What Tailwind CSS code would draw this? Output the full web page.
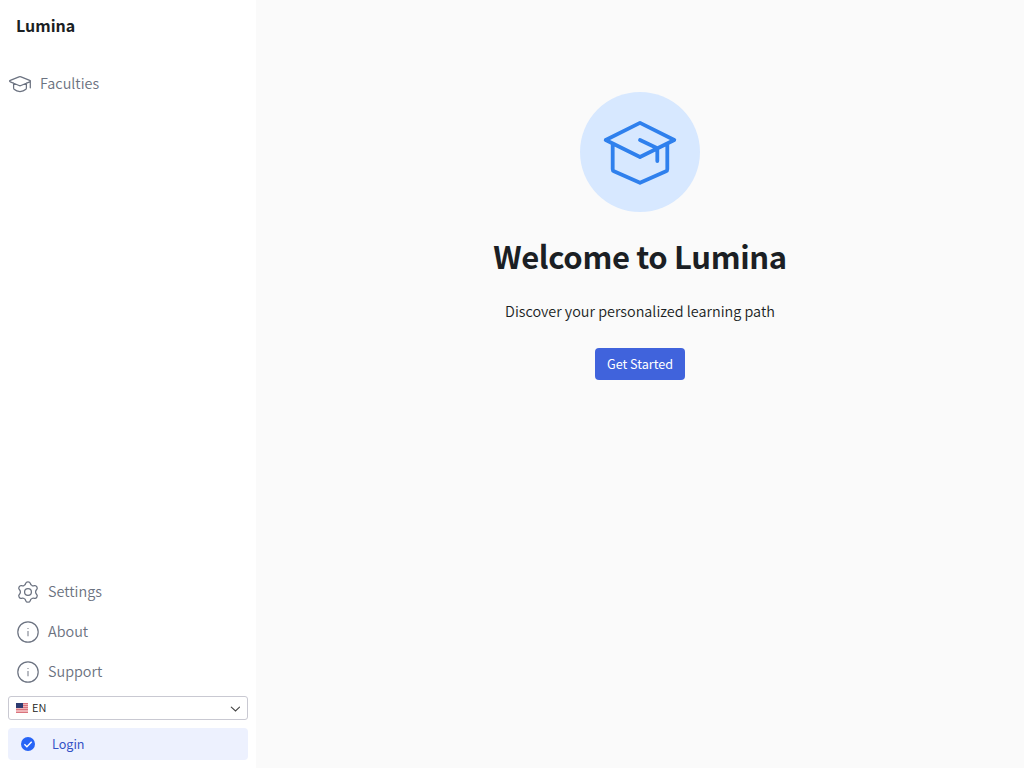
<!DOCTYPE html>
<html lang="en">
<head>
<meta charset="utf-8">
<title>Lumina</title>
<script src="https://cdn.jsdelivr.net/npm/@tailwindcss/browser@4"></script>
</head>
<body class="flex h-screen overflow-hidden bg-[#fafafa] font-['Noto_Sans_CJK_SC',sans-serif] text-[#1b1f24]">
<aside class="flex w-64 flex-col bg-white">
  <h1 class="px-4 pt-3 text-[16px] leading-[26px] font-bold">Lumina</h1>
  <nav class="mt-[34px] flex h-6 items-center gap-2 px-2 text-[14.4px] leading-6 font-[350] text-[#6b7280]">
    <svg class="size-6" viewBox="0 0 24 24" fill="none" stroke="currentColor" stroke-width="1.25" stroke-linecap="round" stroke-linejoin="round"><path d="M13 4.900l8.700 3.400c1 .4 1 1.100 0 1.500L13 13.500c-.6.3-1.400.3-2 0L2.300 9.800c-1-.4-1-1.100 0-1.500L11 4.900c.6-.2 1.400-.2 2 0zM22.300 9.300v6.500M5.600 11.200v4.900c0 .4.200.8.500 1.100 3.300 3.100 8.500 3.100 11.800 0 .3-.3.500-.7.500-1.100v-4.900"/></svg>
    <span class="mt-[-2px]">Faculties</span>
  </nav>
  <div class="mt-auto flex flex-col gap-4 px-4 pb-3 text-[14.4px] leading-6 font-[350] text-[#6b7280]">
    <div class="flex h-6 items-center gap-2">
      <svg class="size-6" viewBox="0 0 24 24" fill="none" stroke="currentColor" stroke-width="1.25" stroke-linejoin="round"><circle cx="12" cy="12" r="3.400"/><defs><path id="tooth" d="M8.200 5.420C9.400 4.730 9.600 3.900 9.800 3.200C10.300 1.300 13.700 1.300 14.200 3.200C14.400 3.900 14.600 4.730 15.800 5.420"/></defs><use href="#tooth"/><use href="#tooth" transform="rotate(60 12 12)"/><use href="#tooth" transform="rotate(120 12 12)"/><use href="#tooth" transform="rotate(180 12 12)"/><use href="#tooth" transform="rotate(240 12 12)"/><use href="#tooth" transform="rotate(300 12 12)"/></svg>
      <span class="mt-[-2px]">Settings</span>
    </div>
    <div class="flex h-6 items-center gap-2">
      <svg class="size-6" viewBox="0 0 24 24" fill="none" stroke="currentColor" stroke-width="1.2"><circle cx="12" cy="12" r="10.200"/><path d="M12 11v5.200M12 8v1.100" stroke-opacity=".8"/></svg>
      <span class="mt-[-2px]">About</span>
    </div>
    <div class="flex h-6 items-center gap-2">
      <svg class="size-6" viewBox="0 0 24 24" fill="none" stroke="currentColor" stroke-width="1.2"><circle cx="12" cy="12" r="10.200"/><path d="M12 11v5.200M12 8v1.100" stroke-opacity=".8"/></svg>
      <span class="mt-[-2px]">Support</span>
    </div>
  </div>
  <div class="mx-2 flex h-6 items-center rounded-[3px] border border-[#c9c9d2] px-[7px] text-[11px] leading-4">
    <svg class="mr-1 h-[10px] w-3" viewBox="0 0 12 10"><path fill="#f0b4b8" d="M0 0h12v10H0z"/><path fill="#d9747d" d="M0 0h12v1H0zM0 2h12v1H0zM0 4h12v1H0zM0 6h12v1H0zM0 9h12v1H0z"/><path fill="#2b3a70" d="M0 0h7v5H0z"/></svg>
    <span class="mt-[-2px] font-[350] text-[#222]">EN</span>
    <svg class="mt-[2px] ml-auto h-[6px] w-[10px]" viewBox="0 0 10 6" fill="none" stroke="#444" stroke-width="1.100" stroke-linecap="round"><path d="M1.300 1.200L5.500 5 9.500 1.200"/></svg>
  </div>
  <button class="m-2 flex h-8 items-center rounded bg-[#edf1fe] px-[13px] text-[12.6px] leading-5 text-[#3451c6]">
    <svg class="mr-[17px] size-[14px]" viewBox="0 0 14 14"><circle cx="7" cy="7" r="7" fill="#2764f6"/><path d="M3.400 7.200l2.500 2.500 4.800-5" fill="none" stroke="#fff" stroke-width="1.400"/></svg>
    Login
  </button>
</aside>
<main class="flex flex-1 flex-col items-center pt-[92px]">
  <div class="flex size-[120px] items-center justify-center rounded-full bg-[#d7e8ff]">
    <svg class="size-20" viewBox="0 0 80 80" fill="none" stroke="#2f80ed" stroke-width="3.800" stroke-linecap="round" stroke-linejoin="round"><path d="M40 10.900L74.300 28 40 45 5.700 28zM12.700 32v25.200q0 1.500 1.300 2.100L40 70.800l26-11.500q1.300-.6 1.300-2.100V32M40 28l17.300 8.300V49"/></svg>
  </div>
  <h2 class="mt-[22px] text-[31px] leading-[44px] font-bold tracking-[-0.35px]">Welcome to Lumina</h2>
  <p class="mt-[21px] text-[14.4px] leading-6 font-[350]">Discover your personalized learning path</p>
  <button class="mt-[25px] h-8 rounded-[4px] bg-[#4063dc] px-3 text-[12.6px] leading-5 text-white">Get Started</button>
</main>
</body>
</html>
